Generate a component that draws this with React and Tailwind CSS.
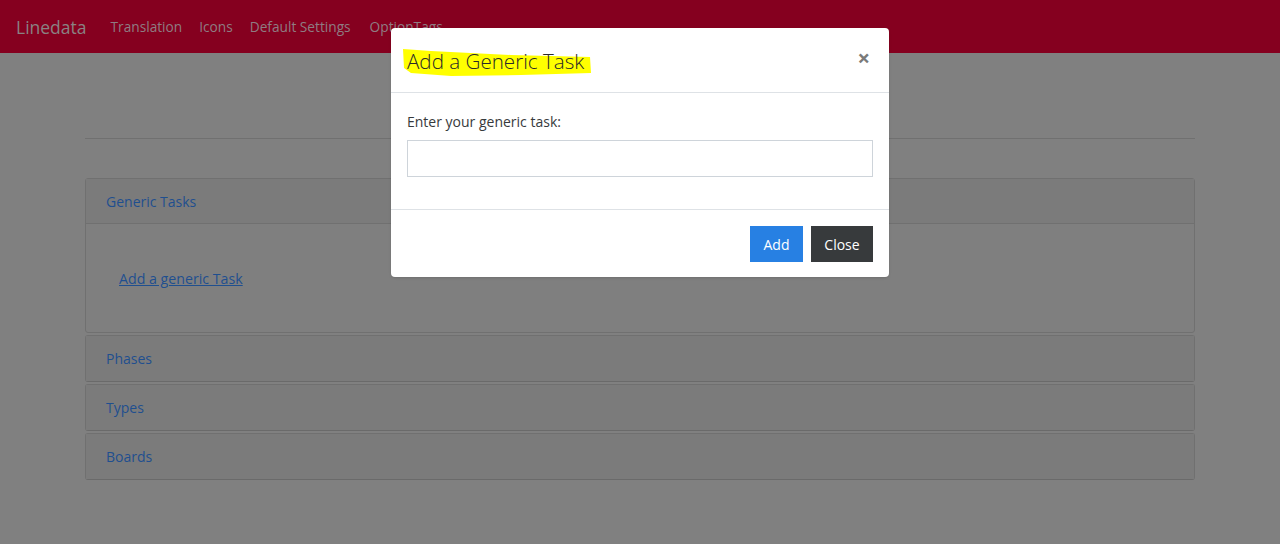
import React from "react";

const font = { fontFamily: '"Open Sans", "Noto Sans", "Liberation Sans", sans-serif' };

function Card({ title, children }) {
  return (
    <div className="mb-[2px] rounded-[3px] border border-[#707070] border-b-[#6a6a6a] bg-[#7f7f7f]">
      <div className="flex h-[45px] items-center bg-[#7b7b7b] px-5 text-[14px] text-[#1f4f8f]">
        {title}
      </div>
      {children}
    </div>
  );
}

export default function App() {
  return (
    <div className="relative h-[544px] w-[1280px] overflow-hidden bg-[#808080]" style={font}>
      <nav className="flex h-[53px] items-center bg-[#85001f] px-4 pt-[2px]">
        <span className="mr-[24px] text-[17.5px] text-[#8a8283]">Linedata</span>
        <div className="flex gap-[17px] text-[13.7px] text-[#8f7c82]">
          <span>Translation</span>
          <span>Icons</span>
          <span>Default Settings</span>
          <span className="ml-[2px]">OptionTags</span>
        </div>
      </nav>

      <div className="mx-auto w-[1110px]">
        <div className="h-[85px]" />
        <div className="h-px bg-[#707070]" />
        <div className="h-[39px]" />
        <div className="mb-[2px] rounded-[3px] border border-[#707070] bg-[#7f7f7f]">
          <div className="flex h-[45px] items-center border-b border-[#707070] bg-[#7b7b7b] px-5 text-[14px] text-[#1f4f8f]">
            Generic Tasks
          </div>
          <div className="flex h-[108px] items-center px-[33px] pt-[2px]">
            <a className="text-[14.2px] text-[#1f4f8f] underline">Add a generic Task</a>
          </div>
        </div>
        <Card title="Phases" />
        <Card title="Types" />
        <Card title="Boards" />
      </div>

      <div className="absolute left-[391px] top-[28px] w-[498px] rounded-[4px] bg-white shadow-sm">
        <div className="relative flex h-[65px] items-center justify-between border-b border-[#dee2e6] px-4">
          <svg className="absolute left-0 top-0" width="220" height="60" viewBox="0 0 220 60">
            <polygon points="12,21 40,23 120,27 199,29 200,45 130,47 60,48 20,45 13,40" fill="#ffff00" />
          </svg>
          <h5 className="relative mt-[2px] text-[20.6px] font-light text-[#2a2a2a]">Add a Generic Task</h5>
          <span className="relative -mt-[7px] mr-[3px] text-[22px] font-bold leading-none text-[#7a7a7a]">×</span>
        </div>
        <div className="flex h-[116px] flex-col px-4 pt-[18px]">
          <label className="text-[14px] text-[#373a3c]">Enter your generic task:</label>
          <div className="mt-[8px] h-[37px] w-full border border-[#ced4da] bg-white" />
        </div>
        <div className="flex h-[68px] items-center justify-end gap-2 border-t border-[#dee2e6] px-4">
          <button className="h-[36px] w-[53px] bg-[#2780e3] pt-[2px] text-[14px] text-white">Add</button>
          <button className="h-[36px] w-[62px] bg-[#373a3c] pt-[2px] text-[14px] text-white">Close</button>
        </div>
      </div>
    </div>
  );
}
